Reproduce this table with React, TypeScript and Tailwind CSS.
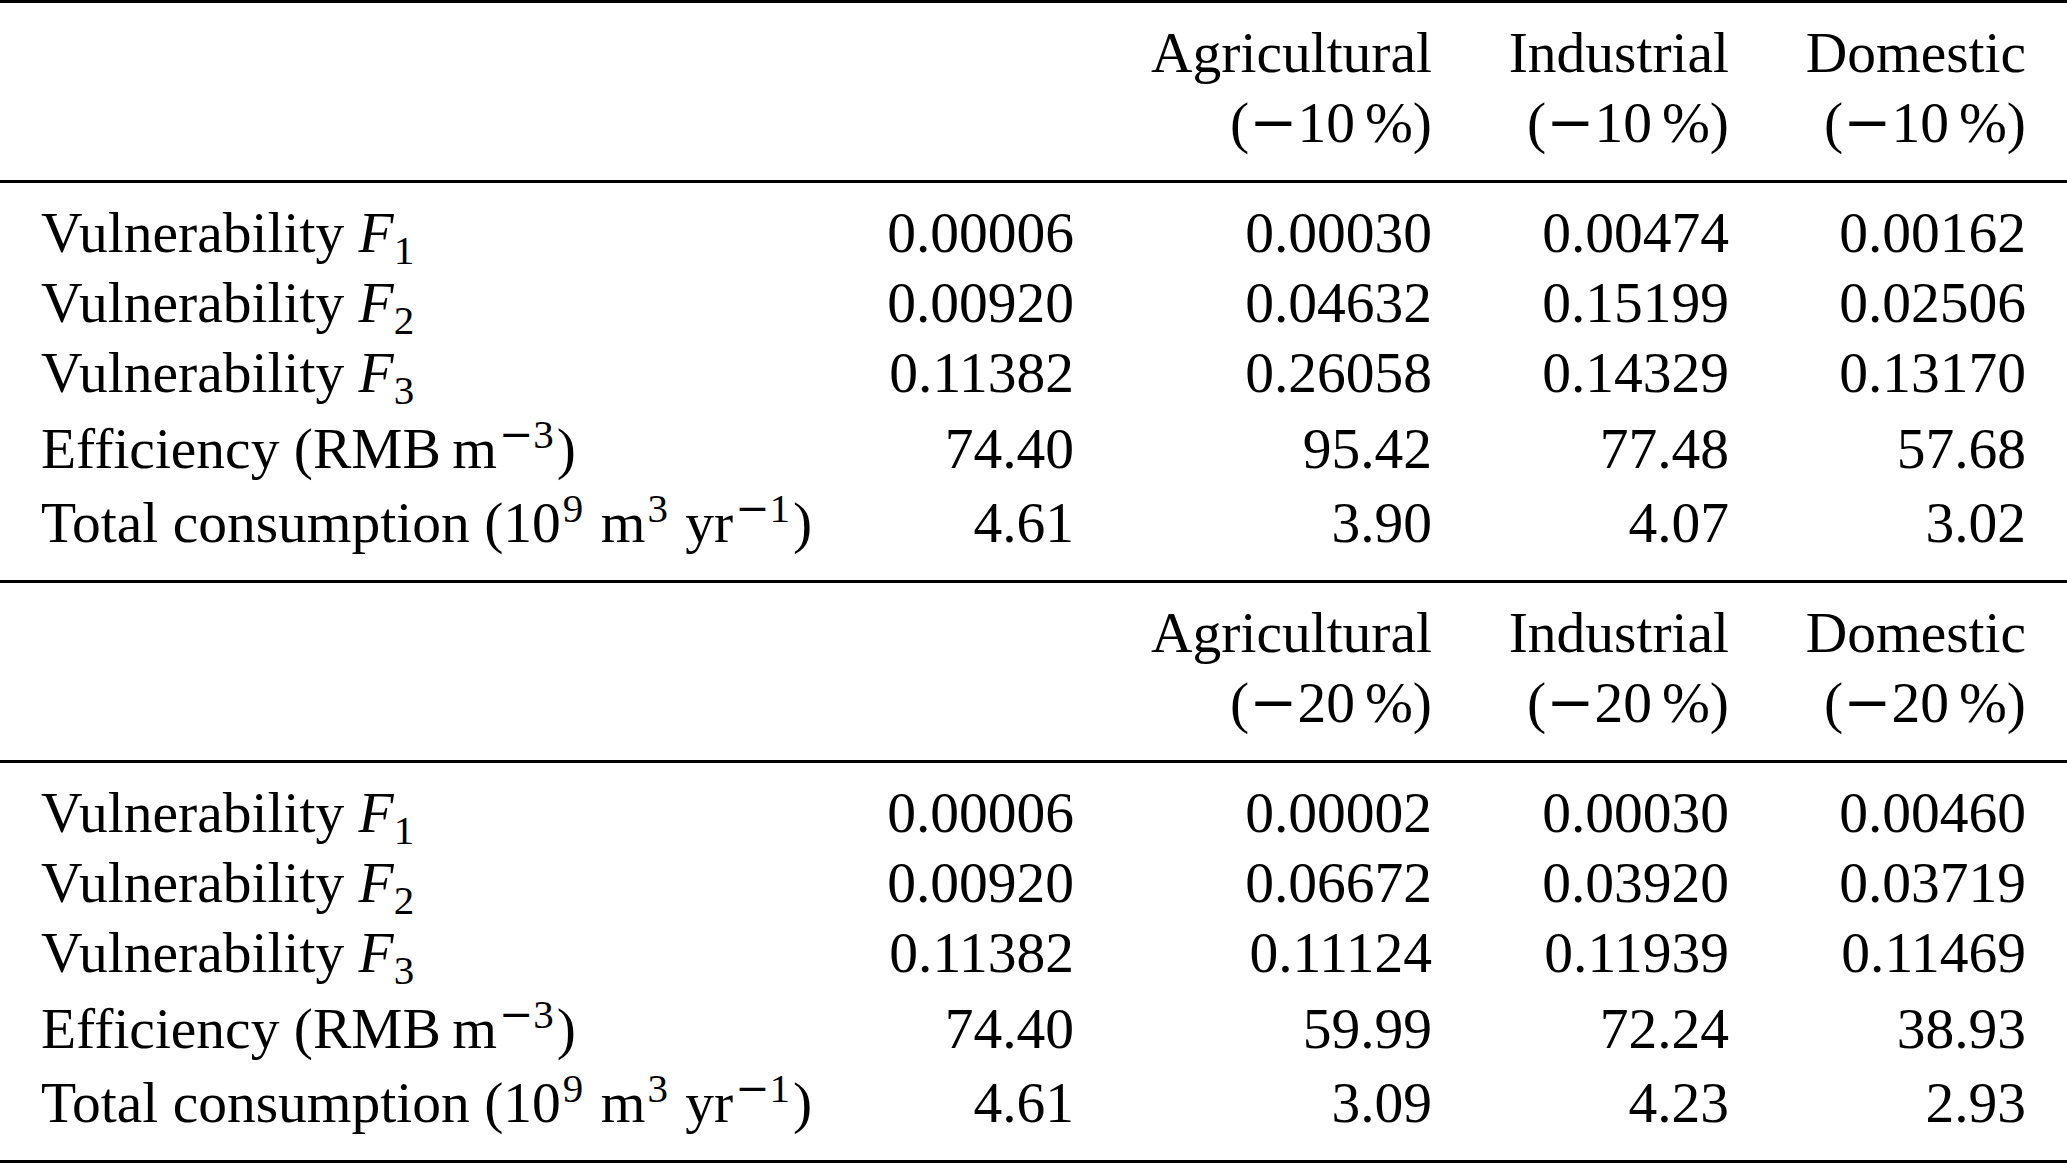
import React from 'react';

function Minus() {
  return <span className="font-['DejaVu_Serif',serif]">{'\u2212'}</span>;
}

function Sup({ children }: { children: React.ReactNode }) {
  return <span className="relative top-[-20px] ml-[2px] mr-[3px] text-[41px] leading-none">{children}</span>;
}
function Sub({ children }: { children: React.ReactNode }) {
  return <span className="relative top-[12px] text-[41px] leading-none">{children}</span>;
}

type Row = { label: React.ReactNode; vals: string[]; cls: string };

const labels: { label: React.ReactNode; cls: string }[] = [
  { label: <>Vulnerability <i>F</i><Sub>1</Sub></>, cls: 'h-[70px]' },
  { label: <>Vulnerability <i>F</i><Sub>2</Sub></>, cls: 'h-[70px]' },
  { label: <>Vulnerability <i>F</i><Sub>3</Sub></>, cls: 'h-[70px]' },
  { label: <>Efficiency (RMB{'\u2009'}m<Sup><Minus />3</Sup>)</>, cls: 'h-[76px] pt-[6px]' },
  { label: <>Total consumption (10<Sup>9</Sup> m<Sup>3</Sup> yr<Sup><Minus />1</Sup>)</>, cls: 'h-[74px] pt-[4px]' },
];

const block1 = [
  ['0.00006', '0.00030', '0.00474', '0.00162'],
  ['0.00920', '0.04632', '0.15199', '0.02506'],
  ['0.11382', '0.26058', '0.14329', '0.13170'],
  ['74.40', '95.42', '77.48', '57.68'],
  ['4.61', '3.90', '4.07', '3.02'],
];
const block2 = [
  ['0.00006', '0.00002', '0.00030', '0.00460'],
  ['0.00920', '0.06672', '0.03920', '0.03719'],
  ['0.11382', '0.11124', '0.11939', '0.11469'],
  ['74.40', '59.99', '72.24', '38.93'],
  ['4.61', '3.09', '4.23', '2.93'],
];

const gridCls = 'grid grid-cols-[700px_374px_358px_297px_297px] pr-[41px]';

function Rule() {
  return <div className="h-[3px] w-full bg-black" />;
}

function Block({ pct, data }: { pct: string; data: string[][] }) {
  const heads = ['Agricultural', 'Industrial', 'Domestic'];
  const rows: Row[] = labels.map((l, i) => ({ label: l.label, vals: data[i], cls: l.cls }));
  return (
    <div>
      <Rule />
      <div className={`${gridCls} pt-[15px] pb-[22px]`}>
        <div />
        <div />
        {heads.map((h) => (
          <div key={h} className="text-right">
            <div className="h-[70px]">{h}</div>
            <div className="h-[70px] whitespace-nowrap">(<Minus />{pct}<span className="ml-[10px]">%</span>)</div>
          </div>
        ))}
      </div>
      <Rule />
      <div className="pt-[15px] pb-[22px]">
        {rows.map((r, i) => (
          <div key={i} className={`${gridCls} ${r.cls}`}>
            <div className="pl-[41px] whitespace-nowrap">{r.label}</div>
            {r.vals.map((v, j) => (
              <div key={j} className="text-right">{v}</div>
            ))}
          </div>
        ))}
      </div>
    </div>
  );
}

export default function App() {
  return (
    <div className="w-[2067px] h-[1164px] bg-white text-black font-['Liberation_Serif',serif] text-[57.5px] leading-[70px]">
      <Block pct="10" data={block1} />
      <Block pct="20" data={block2} />
      <Rule />
    </div>
  );
}
